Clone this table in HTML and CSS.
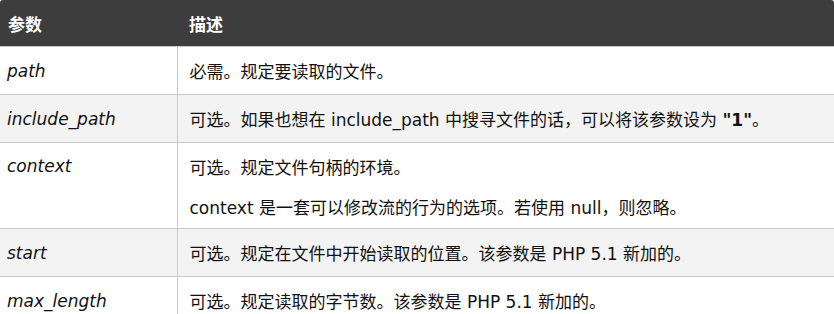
FILE: index.html
```html
<!DOCTYPE html>
<html lang="zh">
<head>
<meta charset="utf-8">
<link rel="stylesheet" href="styles.css">
</head>
<body>
<table class="ref">
  <thead>
    <tr><th class="c1">参数</th><th class="c2">描述</th></tr>
  </thead>
  <tbody>
    <tr><td class="c1"><i>path</i></td><td class="c2">必需。规定要读取的文件。</td></tr>
    <tr class="alt"><td class="c1"><i>include_path</i></td><td class="c2">可选。如果也想在 include_path 中搜寻文件的话，可以将该参数设为 <b>"1"</b>。</td></tr>
    <tr><td class="c1 top"><i>context</i></td><td class="c2"><p>可选。规定文件句柄的环境。</p><p>context 是一套可以修改流的行为的选项。若使用 null，则忽略。</p></td></tr>
    <tr class="alt"><td class="c1"><i>start</i></td><td class="c2">可选。规定在文件中开始读取的位置。该参数是 PHP 5.1 新加的。</td></tr>
    <tr><td class="c1"><i>max_length</i></td><td class="c2">可选。规定读取的字节数。该参数是 PHP 5.1 新加的。</td></tr>
  </tbody>
</table>
</body>
</html>
```
FILE: styles.css
```css
html, body {
  margin: 0;
  padding: 0;
  background: #ffffff;
}
body {
  font-family: "DejaVu Sans", Verdana, "Noto Sans CJK SC", sans-serif;
  font-size: 17px;
  color: #111111;
}
.ref {
  width: 834px;
  border-collapse: collapse;
  table-layout: fixed;
}
.ref th {
  background: #3d3d3d;
  color: #ffffff;
  font-weight: bold;
  text-align: left;
  height: 46px;
  padding: 0;
  font-family: "Noto Sans CJK SC", sans-serif;
}
.ref th.c1 { padding-left: 8px; width: 169px; border-top-left-radius: 3px; }
.ref th.c2 { padding-left: 12px; border-top-right-radius: 3px; }
.ref td {
  padding: 0;
  height: 47px;
  border-top: 1px solid #c9c9c9;
  vertical-align: middle;
}
.ref td.c1 {
  padding-left: 7px;
  border-right: 1px solid #c9c9c9;
}
.ref td.c1.top { vertical-align: top; padding-top: 13px; }
.ref td.c2 { padding-left: 12px; }
.ref tr.alt td { background: #f3f3f3; }
.ref i { font-style: italic; }
.ref b { font-weight: bold; }
.ref p { margin: 0; line-height: 24px; }
.ref p + p { margin-top: 16px; }
.ref td.c2 p:first-child { padding-top: 13px; }
.ref td.c2 p:last-child { padding-bottom: 8px; }
```
